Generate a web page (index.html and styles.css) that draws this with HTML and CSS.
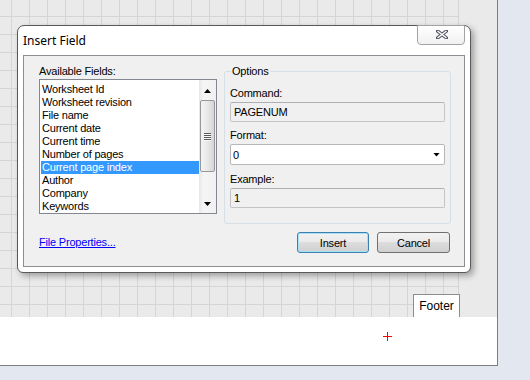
FILE: index.html
```html
<!DOCTYPE html>
<html lang="en">
<head>
    <meta charset="UTF-8">
    <title>Insert Field</title>
    <link rel="stylesheet" href="styles.css">
</head>
<body>
    <div class="sheet">
        <div class="canvas">
            <div class="cells"></div>
            <div class="footer-tag">Footer</div>
        </div>
        <div class="page"><span class="marker"></span></div>
    </div>

    <div class="dialog">
        <div class="titlebar">
            <span class="title">Insert Field</span>
            <button class="close" title="Close">
                <svg width="12" height="9" viewBox="0 0 12 9">
                    <path d="M1.5 1 L10.5 8 M10.5 1 L1.5 8" stroke="#4f5262" stroke-width="3.4" stroke-linecap="square" fill="none"/>
                    <path d="M1.5 1 L10.5 8 M10.5 1 L1.5 8" stroke="#ffffff" stroke-width="1.4" stroke-linecap="butt" fill="none"/>
                </svg>
            </button>
        </div>
        <div class="client">
            <div class="top">
                <div class="fields">
                    <div class="label">Available Fields:</div>
                    <div class="listbox">
                        <ul class="items">
                            <li>Worksheet Id</li>
                            <li>Worksheet revision</li>
                            <li>File name</li>
                            <li>Current date</li>
                            <li>Current time</li>
                            <li>Number of pages</li>
                            <li class="selected">Current page index</li>
                            <li>Author</li>
                            <li>Company</li>
                            <li>Keywords</li>
                        </ul>
                        <div class="vscroll">
                            <span class="arrow up"></span>
                            <span class="thumb"><i></i><i></i><i></i><i></i></span>
                            <span class="arrow down"></span>
                        </div>
                    </div>
                </div>
                <fieldset class="options">
                    <legend>Options</legend>
                    <label class="first">Command:</label>
                    <div class="textbox">PAGENUM</div>
                    <label>Format:</label>
                    <div class="combo"><span>0</span><span class="arrow down"></span></div>
                    <label class="last">Example:</label>
                    <div class="textbox">1</div>
                </fieldset>
            </div>
            <div class="bottom">
                <a href="#" class="link">File Properties...</a>
                <div class="buttons">
                    <button class="btn default">Insert</button>
                    <button class="btn">Cancel</button>
                </div>
            </div>
        </div>
    </div>
</body>
</html>
```

FILE: styles.css
```css
body { margin: 0; width: 530px; height: 380px; overflow: hidden; position: relative; background: #e3e7ef; font-family: "Liberation Sans", Arial, sans-serif; font-size: 11px; letter-spacing: -0.2px; color: #000; }

/* design surface behind the dialog */
.sheet { width: 497px; border-right: 1px solid #7d7d7d; border-bottom: 1px solid #7d7d7d; }
.canvas { height: 317px; background: #eaeaea; position: relative; }
.cells {
    width: 458px; height: 317px;
    border-right: 1px solid #d5d5d5;
    background-image: linear-gradient(to right, #d5d5d5 1px, transparent 1px), linear-gradient(to bottom, #d5d5d5 1px, transparent 1px);
    background-size: 18px 18px;
    background-position: 11px 16px;
}
.footer-tag { position: absolute; left: 413px; top: 294px; width: 45px; height: 23px; border: 1px solid #8c8c8c; border-bottom: none; background: #fff; font-size: 12px; letter-spacing: 0; line-height: 22px; text-align: center; }
.page { height: 48px; background: #fff; position: relative; }
.marker { position: absolute; left: 383px; top: 15px; width: 9px; height: 9px; }
.marker::before, .marker::after { content: ""; position: absolute; background: #ff0000; }
.marker::before { left: 0; top: 4px; width: 9px; height: 1px; }
.marker::after { left: 4px; top: 0; width: 1px; height: 9px; }

/* dialog window */
.dialog {
    position: absolute; left: 17px; top: 25px;
    width: 454px; height: 248px; box-sizing: border-box;
    padding: 0 5px 5px;
    background: #fff;
    border: 1px solid #595959;
    border-radius: 7px 7px 6px 6px;
    box-shadow: 3px 3px 6px rgba(0, 0, 0, 0.32);
}
.titlebar { height: 29px; display: flex; align-items: center; }
.title { font-family: "Noto Sans", "Open Sans", sans-serif; font-size: 12px; letter-spacing: 0; }
.close {
    position: absolute; top: -1px; right: 5px;
    width: 48px; height: 20px; padding: 0;
    display: flex; align-items: center; justify-content: center;
    border: 1px solid #a3a3a3; border-radius: 0 0 4px 4px;
    background: linear-gradient(#ffffff, #f1f1f1);
}
.close svg { margin-left: 2px; margin-top: -1px; }

.client { height: 212px; box-sizing: border-box; border: 1px solid #8c8e94; background: #f0f0f0; }
.top { display: flex; gap: 7px; padding: 9px 13px 0 15px; }
.fields { width: 178px; }
.label { line-height: 13px; margin-bottom: 1px; }

.listbox { height: 135px; box-sizing: border-box; border: 1px solid #828790; background: #fff; display: flex; }
.items { flex: 1; list-style: none; margin: 0; padding: 3px 0 0 1px; }
.items li { line-height: 13px; padding-left: 1px; white-space: nowrap; }
.items .selected { background: #3399ff; color: #fff; }

.vscroll { width: 17px; display: flex; flex-direction: column; align-items: center; padding: 9px 0 7px; box-sizing: border-box; background: linear-gradient(to right, #e6e6e6, #f5f5f5 25%, #f1f1f1); }
.arrow { display: block; width: 7px; height: 4px; background: #000; flex: none; }
.arrow.up { clip-path: polygon(50% 0, 100% 100%, 0 100%); }
.arrow.down { clip-path: polygon(0 0, 100% 0, 50% 100%); }
.vscroll .down { margin-top: auto; }
.thumb {
    width: 15px; height: 72px; box-sizing: border-box; margin: 7px 1px 0 0;
    border: 1px solid #979797; border-radius: 2px;
    background: linear-gradient(to right, #f4f4f4, #e8e8e8 50%, #d6d6d6);
    display: flex; flex-direction: column; align-items: center; justify-content: center; gap: 1px;
}
.thumb i { display: block; width: 7px; height: 1px; background: #5a5a5a; box-shadow: 0 1px 0 #fafafa; }

.options { width: 227px; box-sizing: border-box; margin: 0; padding: 0 5px 15px; min-width: 0; border: 1px solid #d5dfe5; border-radius: 3px; }
.options legend { padding: 0 1px; margin-left: 1px; line-height: 13px; }
.options label { display: block; line-height: 13px; margin: 7px 0 2px; }
.options label.first { margin-top: 9px; }
.options label.last { margin-top: 8px; }
.textbox { height: 20px; box-sizing: border-box; border: 1px solid #c2c4c8; border-top-color: #aeb0b5; border-radius: 2px; background: #f0f0f0; padding: 0 3px; line-height: 18px; }
.combo { height: 21px; box-sizing: border-box; border: 1px solid #b5b7bb; border-radius: 2px; background: #fff; padding: 0 4px 0 2px; display: flex; align-items: center; justify-content: space-between; }

.bottom { display: flex; align-items: center; justify-content: space-between; margin-top: 8px; padding: 0 14px 0 15px; }
.link { color: #0000ff; text-decoration: underline; line-height: 13px; }
.buttons { display: flex; gap: 8px; }
.btn {
    width: 72px; height: 21px; padding: 0;
    font-family: "Liberation Sans", Arial, sans-serif; font-size: 11px; letter-spacing: -0.2px; color: #000;
    border: 1px solid #707070; border-radius: 3px;
    background: linear-gradient(#f2f2f2 0%, #ebebeb 45%, #dddddd 50%, #cfcfcf 100%);
}
.btn.default { border-color: #3c7fb1; box-shadow: inset 0 0 0 1px #a9e0f5; }
.btn + .btn { width: 73px; }
```
